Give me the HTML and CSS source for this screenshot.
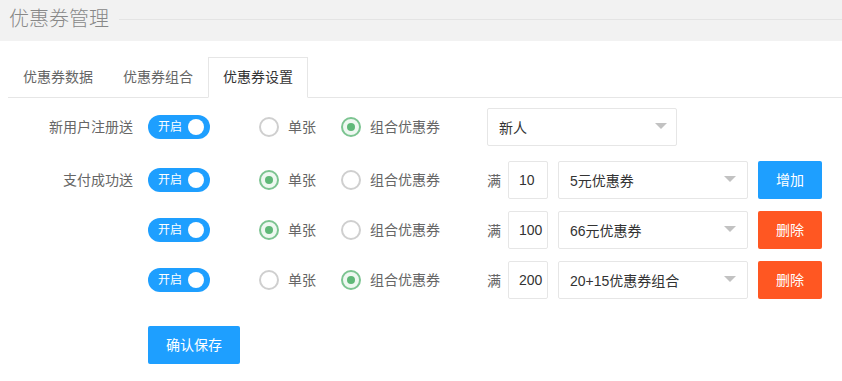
FILE: index.html
```html
<!DOCTYPE html>
<html lang="zh-CN">
<head>
	<meta charset="UTF-8">
	<meta name="viewport" content="width=device-width, initial-scale=1.0">
	<title>优惠券管理</title>
	<link rel="stylesheet" href="styles.css">
</head>
<body>
	<div class="page-head">
		<span class="page-title">优惠券管理</span>
		<span class="head-line"></span>
	</div>

	<div class="tabs">
		<ul class="tab-title">
			<li>优惠券数据</li>
			<li>优惠券组合</li>
			<li class="active">优惠券设置</li>
		</ul>

		<div class="tab-body">
			<form class="coupon-form">
				<!-- 新用户注册 -->
				<div class="row row-first">
					<label class="row-label">新用户注册送</label>
					<span class="switch"><em>开启</em><i></i></span>
					<div class="radios">
						<span class="radio"><i class="radio-icon"></i>单张</span>
						<span class="radio"><i class="radio-icon checked"></i>组合优惠券</span>
					</div>
					<div class="select select-wide"><span>新人</span><i class="arrow"></i></div>
				</div>

				<!-- 支付成功 -->
				<div class="row">
					<label class="row-label">支付成功送</label>
					<span class="switch"><em>开启</em><i></i></span>
					<div class="radios">
						<span class="radio"><i class="radio-icon checked"></i>单张</span>
						<span class="radio"><i class="radio-icon"></i>组合优惠券</span>
					</div>
					<span class="full">满</span>
					<input class="amount" type="text" value="10">
					<div class="select"><span>5元优惠券</span><i class="arrow"></i></div>
					<button type="button" class="btn btn-blue">增加</button>
				</div>

				<div class="row">
					<label class="row-label"></label>
					<span class="switch"><em>开启</em><i></i></span>
					<div class="radios">
						<span class="radio"><i class="radio-icon checked"></i>单张</span>
						<span class="radio"><i class="radio-icon"></i>组合优惠券</span>
					</div>
					<span class="full">满</span>
					<input class="amount" type="text" value="100">
					<div class="select"><span>66元优惠券</span><i class="arrow"></i></div>
					<button type="button" class="btn btn-orange">删除</button>
				</div>

				<div class="row">
					<label class="row-label"></label>
					<span class="switch"><em>开启</em><i></i></span>
					<div class="radios">
						<span class="radio"><i class="radio-icon"></i>单张</span>
						<span class="radio"><i class="radio-icon checked"></i>组合优惠券</span>
					</div>
					<span class="full">满</span>
					<input class="amount" type="text" value="200">
					<div class="select"><span>20+15优惠券组合</span><i class="arrow"></i></div>
					<button type="button" class="btn btn-orange">删除</button>
				</div>

				<div class="actions">
					<button type="button" class="btn btn-blue btn-save">确认保存</button>
				</div>
			</form>
		</div>
	</div>
</body>
</html>
```

FILE: styles.css
```css
body {
	margin: 0;
	background-color: #fff;
	font-family: "Liberation Sans", "Noto Sans CJK SC", sans-serif;
	font-size: 14px;
	color: #333;
}

.page-head {
	display: flex;
	align-items: center;
	height: 38px;
	padding: 0 0 3px 9px;
	background-color: #f2f2f2;
}

.page-title {
	font-size: 20px;
	line-height: 26px;
	color: #888;
	font-weight: 300;
}

.head-line {
	flex: 1;
	height: 1px;
	margin-left: 10px;
	background-color: #e4e4e4;
}

.tabs {
	margin: 16px 0 0 8px;
}

.tab-title {
	display: flex;
	height: 41px;
	margin: 0;
	padding: 0;
	list-style: none;
	box-sizing: border-box;
	border-bottom: 1px solid #e6e6e6;
}

.tab-title li {
	height: 41px;
	box-sizing: border-box;
	padding: 0 14px;
	border: 1px solid transparent;
	line-height: 39px;
	white-space: nowrap;
	color: #666;
}

.tab-title li.active {
	border-color: #e6e6e6;
	border-bottom-color: #fff;
	background-color: #fff;
	color: #333;
}

.tab-body {
	padding: 10px 0;
}

.row {
	display: flex;
	align-items: center;
	height: 38px;
	margin-bottom: 12px;
}

.row-first {
	margin-bottom: 15px;
}

.row-label {
	width: 140px;
	box-sizing: border-box;
	padding-right: 15px;
	text-align: right;
	color: #666;
	line-height: 38px;
}

.switch {
	display: flex;
	align-items: center;
	justify-content: space-between;
	width: 62px;
	height: 24px;
	box-sizing: border-box;
	padding: 0 6px 0 10px;
	margin-right: 49px;
	border-radius: 12px;
	background-color: #1e9fff;
}

.switch em {
	font-style: normal;
	font-size: 12px;
	line-height: 24px;
	color: #fff;
}

.switch i {
	width: 16px;
	height: 16px;
	border-radius: 50%;
	background-color: #fff;
}

.radios {
	display: flex;
	align-items: center;
	width: 228px;
}

.radio {
	display: flex;
	align-items: center;
	margin-right: 25px;
	color: #666;
	line-height: 20px;
}

.radio-icon {
	display: flex;
	align-items: center;
	justify-content: center;
	width: 20px;
	height: 20px;
	box-sizing: border-box;
	margin-right: 9px;
	border: 2px solid #cfcfcf;
	border-radius: 50%;
}

.radio-icon.checked {
	border-color: #7cc491;
	background-color: #eef8f1;
}

.radio-icon.checked::after {
	content: '';
	width: 8px;
	height: 8px;
	border-radius: 50%;
	background-color: #5fb878;
}

.select {
	display: flex;
	align-items: center;
	justify-content: space-between;
	width: 190px;
	height: 38px;
	box-sizing: border-box;
	padding: 0 11px 0 11px;
	border: 1px solid #e6e6e6;
	border-radius: 2px;
	color: #333;
}

.select-wide {
	padding-right: 9px;
}

.arrow {
	width: 0;
	height: 0;
	margin-top: 3px;
	border: 6px solid transparent;
	border-top-color: #c2c2c2;
}

.full {
	width: 14px;
	margin: 0 7px 0 0;
	color: #666;
}

.amount {
	width: 40px;
	height: 38px;
	box-sizing: border-box;
	padding: 0 0 0 10px;
	margin-right: 10px;
	border: 1px solid #e6e6e6;
	border-radius: 2px;
	font-family: inherit;
	font-size: 14px;
	color: #333;
	outline: none;
}

.btn {
	height: 38px;
	padding: 0 18px;
	border: none;
	border-radius: 2px;
	font-family: inherit;
	font-size: 14px;
	line-height: 38px;
	color: #fff;
	cursor: pointer;
}

.row .btn {
	width: 64px;
	margin-left: 10px;
}

.btn-blue {
	background-color: #1e9fff;
}

.btn-orange {
	background-color: #ff5722;
}

.actions {
	margin-top: 27px;
	padding-left: 140px;
}

.btn-save {
	width: 92px;
}
```
